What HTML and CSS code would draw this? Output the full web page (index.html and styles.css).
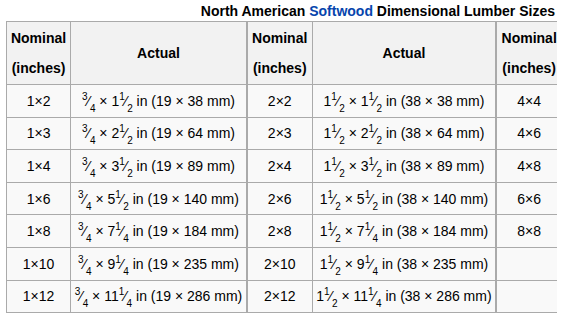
FILE: index.html
```html
<!DOCTYPE html>
<html lang="en">
<head>
    <meta charset="UTF-8">
    <meta name="viewport" content="width=device-width, initial-scale=1.0">
    <title>North American Softwood Dimensional Lumber Sizes</title>
    <link rel="stylesheet" href="styles.css">
</head>
<body>
    <table class="wikitable">
        <caption>North American <a href="#">Softwood</a> Dimensional Lumber Sizes</caption>
        <colgroup>
            <col class="col-nom">
            <col class="col-act1">
            <col class="col-nom2">
            <col class="col-act2">
            <col class="col-nom2">
        </colgroup>
        <tr>
            <th>Nominal<br>(inches)</th>
            <th>Actual</th>
            <th class="grp">Nominal<br>(inches)</th>
            <th>Actual</th>
            <th class="grp">Nominal<br>(inches)</th>
        </tr>
        <tr>
            <td>1×2</td>
            <td><span class="frac"><sup>3</sup>⁄<sub>4</sub></span> × 1<span class="frac"><sup>1</sup>⁄<sub>2</sub></span> in (19 × 38 mm)</td>
            <td class="grp">2×2</td>
            <td>1<span class="frac"><sup>1</sup>⁄<sub>2</sub></span> × 1<span class="frac"><sup>1</sup>⁄<sub>2</sub></span> in (38 × 38 mm)</td>
            <td class="grp">4×4</td>
        </tr>
        <tr>
            <td>1×3</td>
            <td><span class="frac"><sup>3</sup>⁄<sub>4</sub></span> × 2<span class="frac"><sup>1</sup>⁄<sub>2</sub></span> in (19 × 64 mm)</td>
            <td class="grp">2×3</td>
            <td>1<span class="frac"><sup>1</sup>⁄<sub>2</sub></span> × 2<span class="frac"><sup>1</sup>⁄<sub>2</sub></span> in (38 × 64 mm)</td>
            <td class="grp">4×6</td>
        </tr>
        <tr>
            <td>1×4</td>
            <td><span class="frac"><sup>3</sup>⁄<sub>4</sub></span> × 3<span class="frac"><sup>1</sup>⁄<sub>2</sub></span> in (19 × 89 mm)</td>
            <td class="grp">2×4</td>
            <td>1<span class="frac"><sup>1</sup>⁄<sub>2</sub></span> × 3<span class="frac"><sup>1</sup>⁄<sub>2</sub></span> in (38 × 89 mm)</td>
            <td class="grp">4×8</td>
        </tr>
        <tr>
            <td>1×6</td>
            <td><span class="frac"><sup>3</sup>⁄<sub>4</sub></span> × 5<span class="frac"><sup>1</sup>⁄<sub>2</sub></span> in (19 × 140 mm)</td>
            <td class="grp">2×6</td>
            <td>1<span class="frac"><sup>1</sup>⁄<sub>2</sub></span> × 5<span class="frac"><sup>1</sup>⁄<sub>2</sub></span> in (38 × 140 mm)</td>
            <td class="grp">6×6</td>
        </tr>
        <tr>
            <td>1×8</td>
            <td><span class="frac"><sup>3</sup>⁄<sub>4</sub></span> × 7<span class="frac"><sup>1</sup>⁄<sub>4</sub></span> in (19 × 184 mm)</td>
            <td class="grp">2×8</td>
            <td>1<span class="frac"><sup>1</sup>⁄<sub>2</sub></span> × 7<span class="frac"><sup>1</sup>⁄<sub>4</sub></span> in (38 × 184 mm)</td>
            <td class="grp">8×8</td>
        </tr>
        <tr>
            <td>1×10</td>
            <td><span class="frac"><sup>3</sup>⁄<sub>4</sub></span> × 9<span class="frac"><sup>1</sup>⁄<sub>4</sub></span> in (19 × 235 mm)</td>
            <td class="grp">2×10</td>
            <td>1<span class="frac"><sup>1</sup>⁄<sub>2</sub></span> × 9<span class="frac"><sup>1</sup>⁄<sub>4</sub></span> in (38 × 235 mm)</td>
            <td class="grp"></td>
        </tr>
        <tr>
            <td>1×12</td>
            <td><span class="frac"><sup>3</sup>⁄<sub>4</sub></span> × 11<span class="frac"><sup>1</sup>⁄<sub>4</sub></span> in (19 × 286 mm)</td>
            <td class="grp">2×12</td>
            <td>1<span class="frac"><sup>1</sup>⁄<sub>2</sub></span> × 11<span class="frac"><sup>1</sup>⁄<sub>4</sub></span> in (38 × 286 mm)</td>
            <td class="grp"></td>
        </tr>
    </table>
</body>
</html>
```

FILE: styles.css
```css
body {
    margin: 3px 6px;
    font-family: "Liberation Sans", Arial, sans-serif;
    font-size: 14px;
    color: #000;
    background: #fff;
}
.wikitable {
    border-collapse: collapse;
    border: 1px solid #aaa;
    background: #f9f9f9;
    white-space: nowrap;
    table-layout: fixed;
    width: 556px;
}
.col-nom { width: 64px; }
.col-act1 { width: 176px; }
.col-nom2 { width: 65px; }
.col-act2 { width: 184px; }
.wikitable caption {
    font-weight: bold;
    line-height: 17px;
    padding: 0 7px 1px 0;
    text-align: right;
}
.wikitable caption a {
    color: #0645ad;
    text-decoration: none;
}
.wikitable th,
.wikitable td {
    border: 1px solid #aaa;
    padding: 3px 2px;
    text-align: center;
}
.wikitable th {
    background: #f2f2f2;
    line-height: 30px;
    padding: 1px 2px;
}
.wikitable td {
    height: 25.6px;
}
.wikitable .grp {
    border-left-width: 2px;
}
.frac sup,
.frac sub {
    font-size: 10px;
    line-height: 0;
}
.frac sup {
    vertical-align: 6px;
}
.frac sub {
    vertical-align: -6px;
}
```
